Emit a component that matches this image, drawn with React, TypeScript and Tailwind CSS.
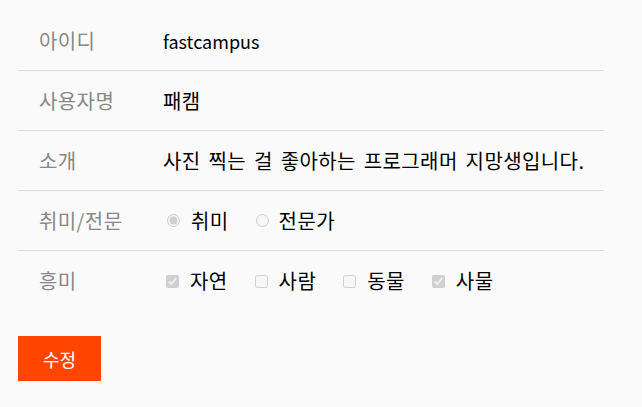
import React from "react";

const Row = ({ label, children, last }: { label: string; children: React.ReactNode; last?: boolean }) => (
  <div className={`flex items-center h-[60px] ${last ? "" : "border-b border-[#dddddd]"}`}>
    <div className="w-[145px] pl-[21px] text-[#888888] tracking-[0.4px]">{label}</div>
    <div className="flex items-center text-black tracking-[0.4px] [word-spacing:3px]">{children}</div>
  </div>
);

export default function App() {
  return (
    <div
      className="w-[642px] h-[407px] bg-[#fafafa] pt-[11px] pl-[18px] text-[20px] leading-none"
      style={{ fontFamily: '"Noto Sans CJK KR", "Noto Sans", sans-serif' }}
    >
      <div className="w-[586px]">
        <Row label="아이디"><span className="text-[18px] tracking-normal">fastcampus</span></Row>
        <Row label="사용자명">패캠</Row>
        <Row label="소개">사진 찍는 걸 좋아하는 프로그래머 지망생입니다.</Row>
        <Row label="취미/전문">
          <label className="flex items-center ml-[4px]">
            <input type="radio" name="t" defaultChecked disabled className="w-[13px] h-[13px]" />
            <span className="ml-[11px]">취미</span>
          </label>
          <label className="flex items-center ml-[27px]">
            <input type="radio" name="t" disabled className="w-[13px] h-[13px]" />
            <span className="ml-[10px]">전문가</span>
          </label>
        </Row>
        <Row label="흥미" last>
          {[
            ["자연", true],
            ["사람", false],
            ["동물", false],
            ["사물", true],
          ].map(([t, c], i) => (
            <label key={i} className={`flex items-center ${i === 0 ? "ml-[3px]" : "ml-[27px]"}`}>
              <input type="checkbox" defaultChecked={c as boolean} disabled className="w-[13px] h-[13px]" />
              <span className="ml-[11px]">{t as string}</span>
            </label>
          ))}
        </Row>
      </div>
      <button className="mt-[25px] w-[83px] h-[45px] bg-[#ff4500] text-white text-[18px]">수정</button>
    </div>
  );
}
